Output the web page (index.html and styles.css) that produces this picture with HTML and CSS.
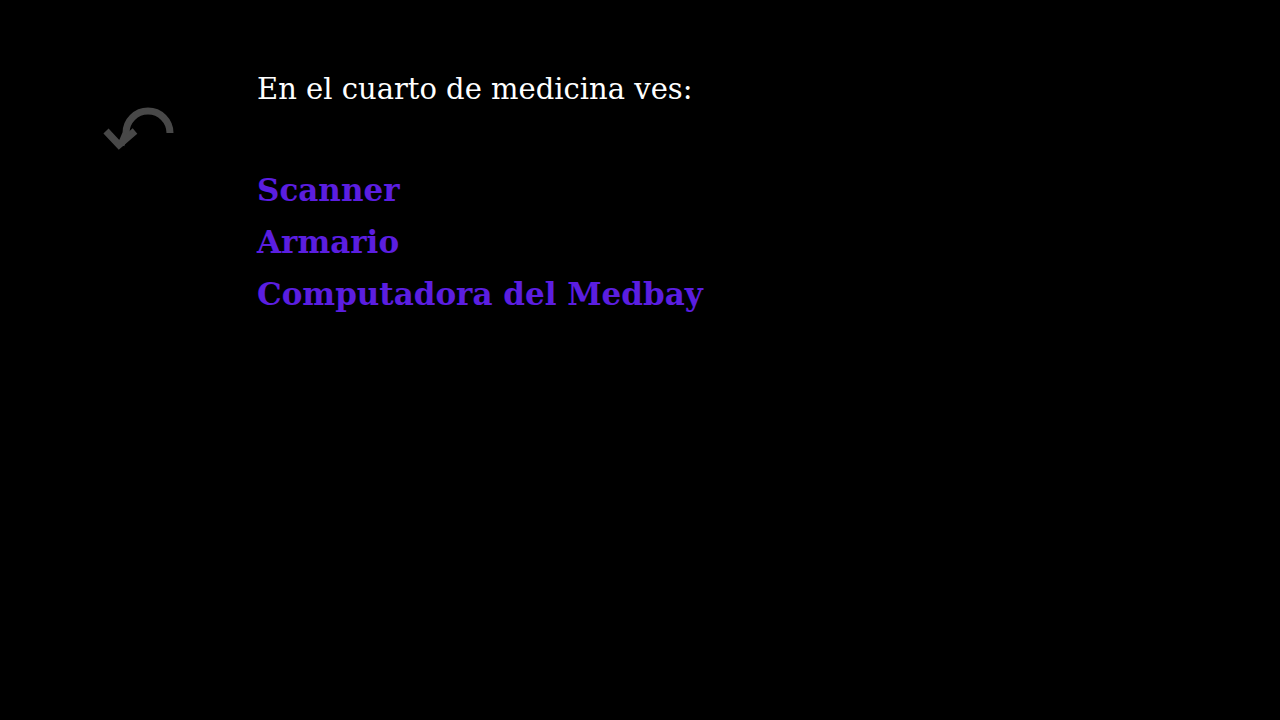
FILE: index.html
```html
<!DOCTYPE html>
<html lang="es">
<head>
<meta charset="utf-8">
<title>Medbay</title>
<link rel="stylesheet" href="styles.css">
</head>
<body>
<a class="back" href="#" aria-label="Volver">
  <svg width="80" height="60" viewBox="0 0 80 60">
    <path d="M70 33 A22 22 0 0 0 26 33 L21 45" fill="none" stroke="#484848" stroke-width="7"/>
    <path d="M6 31 L19 45 L35 31" fill="none" stroke="#484848" stroke-width="7" stroke-linejoin="miter"/>
  </svg>
</a>
<main class="story">
  <p class="intro">En el cuarto de medicina ves:</p>
  <ul class="choices">
    <li><a href="#">Scanner</a></li>
    <li><a href="#">Armario</a></li>
    <li><a href="#">Computadora del Medbay</a></li>
  </ul>
</main>
</body>
</html>
```

FILE: styles.css
```css
html, body {
  margin: 0;
  padding: 0;
  background: #000;
  height: 100%;
}
body {
  font-family: "DejaVu Serif", "Liberation Serif", serif;
  color: #fff;
  position: relative;
}
.back {
  position: absolute;
  left: 100px;
  top: 100px;
  display: block;
  width: 80px;
  height: 60px;
}
.story {
  padding: 64px 0 0 257px;
  font-size: 29px;
  line-height: 51px;
}
.intro {
  margin: 0 0 50px 0;
}
.choices {
  list-style: none;
  margin: 0;
  padding: 0;
}
.choices a {
  color: #5b1ee0;
  font-size: 31px;
  font-weight: bold;
  text-decoration: none;
}
```
